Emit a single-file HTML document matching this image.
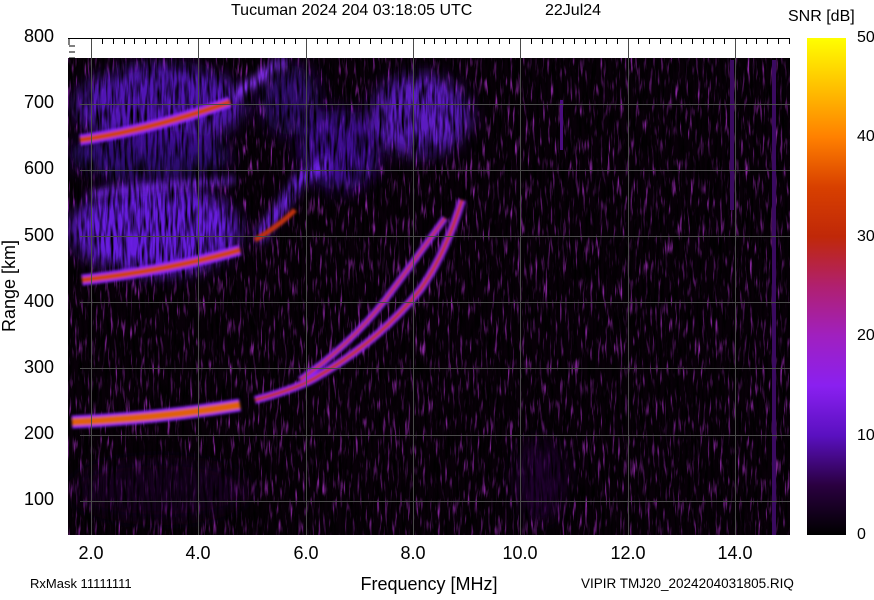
<!DOCTYPE html>
<html><head><style>
body{margin:0;background:#fff;width:874px;height:595px;overflow:hidden;font-family:"Liberation Sans",sans-serif}
svg text{font-family:"Liberation Sans",sans-serif;fill:#000}
</style></head><body>
<svg width="874" height="595" xmlns="http://www.w3.org/2000/svg">
<defs>
<filter id="b4"><feGaussianBlur stdDeviation="4"/></filter>
<filter id="b8"><feGaussianBlur stdDeviation="8"/></filter>
<filter id="b1"><feGaussianBlur stdDeviation="1.2"/></filter>
<filter id="nz" x="0" y="0" width="100%" height="100%">
<feTurbulence type="fractalNoise" baseFrequency="0.35 0.04" numOctaves="2" seed="3"/>
<feColorMatrix type="matrix" values="0 0 0 0 0  0 0 0 0 0  0 0 0 0 0  -2.4 0 0 0 1.45"/>
</filter>
<filter id="nz2" x="0" y="0" width="100%" height="100%">
<feTurbulence type="fractalNoise" baseFrequency="0.4 0.05" numOctaves="2" seed="7"/>
<feColorMatrix type="matrix" values="0 0 0 0 0.25  0 0 0 0 0.02  0 0 0 0 0.35  4 0 0 0 -2.2"/>
</filter>
<linearGradient id="cb" x1="0" y1="1" x2="0" y2="0">
<stop offset="0" stop-color="#000"/>
<stop offset="0.1" stop-color="#2a0040"/>
<stop offset="0.2" stop-color="#5a10c0"/>
<stop offset="0.3" stop-color="#8a20f0"/>
<stop offset="0.4" stop-color="#a020c0"/>
<stop offset="0.5" stop-color="#b02070"/>
<stop offset="0.6" stop-color="#c02808"/>
<stop offset="0.7" stop-color="#d84000"/>
<stop offset="0.8" stop-color="#ff8000"/>
<stop offset="0.9" stop-color="#ffc000"/>
<stop offset="1" stop-color="#ffff00"/>
</linearGradient>
</defs>
<text x="231" y="15" font-size="16">Tucuman 2024 204 03:18:05 UTC</text>
<text x="545" y="15" font-size="16">22Jul24</text>
<text x="788" y="21" font-size="16">SNR [dB]</text>
<rect x="68" y="38" width="722" height="20" fill="#fff"/>
<svg x="68" y="58" width="722" height="477">
<rect width="722" height="477" fill="#080008"/>
<rect width="722" height="477" filter="url(#nz2)"/>
<g filter="url(#b8)">
<ellipse cx="87" cy="172" rx="85" ry="45" fill="#6a20e8" opacity="0.95"/>
<ellipse cx="92" cy="47" rx="85" ry="40" fill="#5a18c8" opacity="0.9"/>
<ellipse cx="82" cy="97" rx="80" ry="25" fill="#3a0a90" opacity="0.8"/>
<ellipse cx="352" cy="57" rx="50" ry="40" fill="#6a20e0" opacity="0.85"/>
<ellipse cx="272" cy="92" rx="40" ry="40" fill="#4a14b0" opacity="0.8"/>
<ellipse cx="222" cy="42" rx="30" ry="35" fill="#3a0a90" opacity="0.7"/>
<ellipse cx="472" cy="422" rx="25" ry="40" fill="#2a0640" opacity="0.7"/>
<ellipse cx="92" cy="432" rx="90" ry="30" fill="#20042e" opacity="0.6"/>
</g>
<g filter="url(#b4)">
<path d="M22 137 Q92 127 167 122" stroke="#7a28f0" stroke-width="6" fill="none"/>
<path d="M167 37 L217 2" stroke="#8a30ff" stroke-width="10" fill="none"/>
<path d="M190 182 L232 122 L262 102" stroke="#7020e8" stroke-width="12" fill="none"/>
</g>
<rect width="722" height="477" filter="url(#nz)"/>
<rect x="662" y="2" width="4" height="150" fill="#3a0a60"/>
<rect x="704" y="2" width="4" height="475" fill="#3a0a60"/>
<rect x="492" y="42" width="3" height="50" fill="#4a0c80"/>
<g filter="url(#b1)" transform="translate(-68,-58)">
<path d="M72 422 Q160 418 240 405" stroke="#8a20ff" stroke-width="13" fill="none"/>
<path d="M72 422 Q160 418 240 405" stroke="#e06010" stroke-width="8" fill="none"/>
<path d="M255 400 Q300 388 320 375 Q380 340 420 290 Q445 255 462 200" stroke="#8a20ff" stroke-width="8" fill="none"/>
<path d="M255 400 Q300 388 320 375 Q380 340 420 290 Q445 255 462 200" stroke="#c03010" stroke-width="4" fill="none"/>
<path d="M300 380 Q350 345 385 300 Q415 260 445 218" stroke="#8a20ff" stroke-width="7" fill="none"/>
<path d="M300 380 Q350 345 385 300 Q415 260 445 218" stroke="#c03010" stroke-width="3" fill="none"/>
<path d="M82 280 Q170 270 240 250" stroke="#8a20ff" stroke-width="11" fill="none"/>
<path d="M82 280 Q170 270 240 250" stroke="#d04008" stroke-width="6" fill="none"/>
<path d="M80 140 Q150 130 230 102" stroke="#8a20ff" stroke-width="11" fill="none"/>
<path d="M80 140 Q150 130 230 102" stroke="#d04008" stroke-width="6" fill="none"/>
<path d="M255 240 Q280 225 295 210" stroke="#c03010" stroke-width="5" fill="none"/>
</g>
</svg>
<g stroke="#4a4a4a" stroke-width="1">
<line x1="91.5" y1="38" x2="91.5" y2="535"/><line x1="198.5" y1="38" x2="198.5" y2="535"/>
<line x1="306.5" y1="38" x2="306.5" y2="535"/><line x1="413.5" y1="38" x2="413.5" y2="535"/>
<line x1="520.5" y1="38" x2="520.5" y2="535"/><line x1="628.5" y1="38" x2="628.5" y2="535"/>
<line x1="735.5" y1="38" x2="735.5" y2="535"/>
<line x1="80" y1="104.5" x2="790" y2="104.5"/><line x1="80" y1="170.5" x2="790" y2="170.5"/>
<line x1="80" y1="236.5" x2="790" y2="236.5"/><line x1="80" y1="302.5" x2="790" y2="302.5"/>
<line x1="80" y1="368.5" x2="790" y2="368.5"/><line x1="80" y1="435.5" x2="790" y2="435.5"/>
<line x1="80" y1="501.5" x2="790" y2="501.5"/>
</g>
<g stroke="#000" stroke-width="1">
<line x1="68" y1="38.5" x2="790" y2="38.5"/>
<path d="M69 39v6M69 46h6M69 52h6M69 58h6M102.5 39v5M113.5 39v5M124.5 39v5M134.5 39v5M145.5 39v5M156.5 39v5M166.5 39v5M177.5 39v5M188.5 39v5M209.5 39v5M220.5 39v5M231.5 39v5M241.5 39v5M252.5 39v5M263.5 39v5M274.5 39v5M284.5 39v5M295.5 39v5M317.5 39v5M327.5 39v5M338.5 39v5M349.5 39v5M359.5 39v5M370.5 39v5M381.5 39v5M392.5 39v5M402.5 39v5M424.5 39v5M434.5 39v5M445.5 39v5M456.5 39v5M467.5 39v5M477.5 39v5M488.5 39v5M499.5 39v5M509.5 39v5M531.5 39v5M542.5 39v5M552.5 39v5M563.5 39v5M574.5 39v5M585.5 39v5M595.5 39v5M606.5 39v5M617.5 39v5M638.5 39v5M649.5 39v5M660.5 39v5M671.5 39v5M681.5 39v5M692.5 39v5M703.5 39v5M713.5 39v5M724.5 39v5M746.5 39v5M756.5 39v5M767.5 39v5M778.5 39v5M789.5 39v5"/>
</g>
<g font-size="18" text-anchor="end">
<text x="54" y="42">800</text><text x="54" y="108">700</text><text x="54" y="174">600</text>
<text x="54" y="241">500</text><text x="54" y="307">400</text><text x="54" y="373">300</text>
<text x="54" y="439">200</text><text x="54" y="505">100</text>
</g>
<g font-size="18" text-anchor="middle">
<text x="91" y="559">2.0</text><text x="198" y="559">4.0</text><text x="306" y="559">6.0</text>
<text x="413" y="559">8.0</text><text x="520" y="559">10.0</text><text x="628" y="559">12.0</text>
<text x="735" y="559">14.0</text>
</g>
<text x="429" y="590" font-size="18" text-anchor="middle">Frequency [MHz]</text>
<text transform="translate(15,286) rotate(-90)" font-size="18" text-anchor="middle">Range [km]</text>
<text x="30" y="588" font-size="13">RxMask 11111111</text>
<text x="581" y="588" font-size="13.5">VIPIR  TMJ20_2024204031805.RIQ</text>
<rect x="807" y="38" width="39" height="497" fill="url(#cb)"/>
<g font-size="16"><text x="857" y="42">50</text><text x="857" y="141">40</text><text x="857" y="241">30</text>
<text x="857" y="340">20</text><text x="857" y="440">10</text><text x="857" y="539">0</text></g>
</svg>
</body></html>
